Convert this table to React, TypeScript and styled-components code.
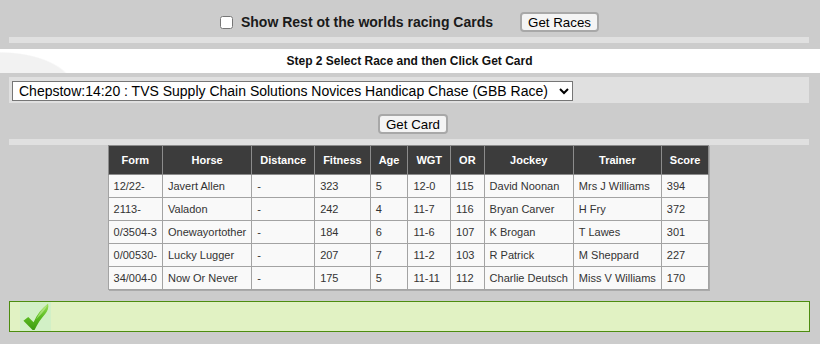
import styled, { createGlobalStyle } from "styled-components";

const GlobalStyle = createGlobalStyle`
    body {
        margin: 0;
        background: #cccccc;
        font-family: "Liberation Sans", Arial, sans-serif;
    }
`;

const Page = styled.div`
    display: flex;
    flex-direction: column;
    padding-top: 12px;
`;

const TopRow = styled.div`
    display: flex;
    align-items: center;
    justify-content: center;
    height: 20px;
    margin-bottom: 5px;
    padding-right: 1px;
`;

const Check = styled.input`
    width: 13px;
    height: 13px;
    margin: 1px 8px 0 0;
`;

const ShowLabel = styled.label`
    font-size: 14px;
    font-weight: bold;
    color: #1a1a1a;
    margin-right: 27px;
`;

const Button = styled.button`
    font-family: "Liberation Sans", Arial, sans-serif;
    font-size: 13.33px;
    color: #000;
    height: 20px;
    padding: 0 6px;
    background: #f4f4f4;
    border: 2px solid #a8a8a8;
    border-radius: 4px;
    line-height: 15px;
`;

const Strip = styled.div<{ $h: number }>`
    height: ${(p) => p.$h}px;
    margin: 0 11px 0 9px;
    background: #e0e0e0;
`;

const StepBand = styled.div`
    margin-top: 6px;
    height: 24px;
    background:
        radial-gradient(ellipse 120px 60px at 0px 40px, #f2f2f2 60%, transparent 62%),
        radial-gradient(ellipse 80px 70px at 760px 70px, #f4f4f4 60%, transparent 62%),
        #ffffff;
    display: flex;
    align-items: center;
    justify-content: center;
    font-size: 12px;
    font-weight: bold;
    color: #111;
    padding-right: 1px;
`;

const RacePanel = styled.div`
    margin: 4px 11px 0 9px;
    padding: 4px 3px 2px;
    background: #e0e0e0;
`;

const RaceSelect = styled.select`
    width: 561px;
    height: 20px;
    font-family: "Liberation Sans", Arial, sans-serif;
    font-size: 14px;
    color: #000;
    background: #fff;
    border: 1px solid #767676;
    border-radius: 0;
    padding: 0 2px;
`;

const CardRow = styled.div`
    display: flex;
    justify-content: center;
    margin: 11px 0 5px;
    padding-left: 6px;
`;

const TableWrap = styled.div`
    display: flex;
    justify-content: center;
    padding-right: 3px;
`;

const Table = styled.table`
    border-collapse: collapse;
    font-size: 11px;
    color: #333;
    border: 1px solid #999;
    box-shadow: 1px 1px 0 #aaa;
`;

const Th = styled.th`
    background: #3c3c3c;
    color: #fff;
    font-weight: bold;
    padding: 7px 8px;
    line-height: 14px;
    border: 1px solid #8c8c8c;
    white-space: nowrap;
`;

const Td = styled.td`
    background: #f9f9f9;
    padding: 4px 5px;
    line-height: 14px;
    text-align: left;
    border: 1px solid #a3a3a3;
    white-space: nowrap;
`;

const Notice = styled.div`
    margin: 11px 10px 0 9px;
    height: 29px;
    border: 1px solid #4d8c10;
    background: #e1f2c3;
    display: flex;
    padding-left: 10px;
`;

const TickBox = styled.div`
    width: 31px;
    height: 29px;
    background: #d2f0c6;
`;

const columns = ["Form", "Horse", "Distance", "Fitness", "Age", "WGT", "OR", "Jockey", "Trainer", "Score"];

const runners = [
    ["12/22-", "Javert Allen", "-", "323", "5", "12-0", "115", "David Noonan", "Mrs J Williams", "394"],
    ["2113-", "Valadon", "-", "242", "4", "11-7", "116", "Bryan Carver", "H Fry", "372"],
    ["0/3504-3", "Onewayortother", "-", "184", "6", "11-6", "107", "K Brogan", "T Lawes", "301"],
    ["0/00530-", "Lucky Lugger", "-", "207", "7", "11-2", "103", "R Patrick", "M Sheppard", "227"],
    ["34/004-0", "Now Or Never", "-", "175", "5", "11-11", "112", "Charlie Deutsch", "Miss V Williams", "170"],
];

const Tick = () => (
    <TickBox>
        <svg width="31" height="29" viewBox="0 0 31 30">
            <defs>
                <linearGradient id="tickFill" x1="0" y1="0" x2="0" y2="1">
                    <stop offset="0" stopColor="#9ee05a" />
                    <stop offset="0.5" stopColor="#5cbc22" />
                    <stop offset="1" stopColor="#3e9a10" />
                </linearGradient>
            </defs>
            <path
                d="M3 19.5 L8 15.5 L13.5 21 C17 13 22 6.5 28.5 1.5 C29.5 6 28 9.5 25.5 12.5 C21 17.5 17.5 23 14.5 29 L12.5 29 Z"
                fill="url(#tickFill)"
            />
            <path d="M16 18 C19 12 23 6 28 2.5 C27 6 24 9 21 13 Z" fill="#c4f09a" opacity="0.6" />
        </svg>
    </TickBox>
);

const App = () => {
    return (
        <>
            <GlobalStyle />
            <Page>
                <TopRow>
                    <Check type="checkbox" id="rest" />
                    <ShowLabel htmlFor="rest">Show Rest ot the worlds racing Cards</ShowLabel>
                    <Button>Get Races</Button>
                </TopRow>
                <Strip $h={6} />
                <StepBand>Step 2 Select Race and then Click Get Card</StepBand>
                <RacePanel>
                    <RaceSelect defaultValue="chepstow-1420">
                        <option value="chepstow-1420">
                            Chepstow:14:20 : TVS Supply Chain Solutions Novices Handicap Chase (GBB Race)
                        </option>
                    </RaceSelect>
                </RacePanel>
                <CardRow>
                    <Button>Get Card</Button>
                </CardRow>
                <Strip $h={6} />
                <TableWrap>
                    <Table>
                        <thead>
                            <tr>
                                {columns.map((c) => (
                                    <Th key={c}>{c}</Th>
                                ))}
                            </tr>
                        </thead>
                        <tbody>
                            {runners.map((r) => (
                                <tr key={r[1]}>
                                    {r.map((v, i) => (
                                        <Td key={i}>{v}</Td>
                                    ))}
                                </tr>
                            ))}
                        </tbody>
                    </Table>
                </TableWrap>
                <Notice>
                    <Tick />
                </Notice>
            </Page>
        </>
    );
};

export default App;
